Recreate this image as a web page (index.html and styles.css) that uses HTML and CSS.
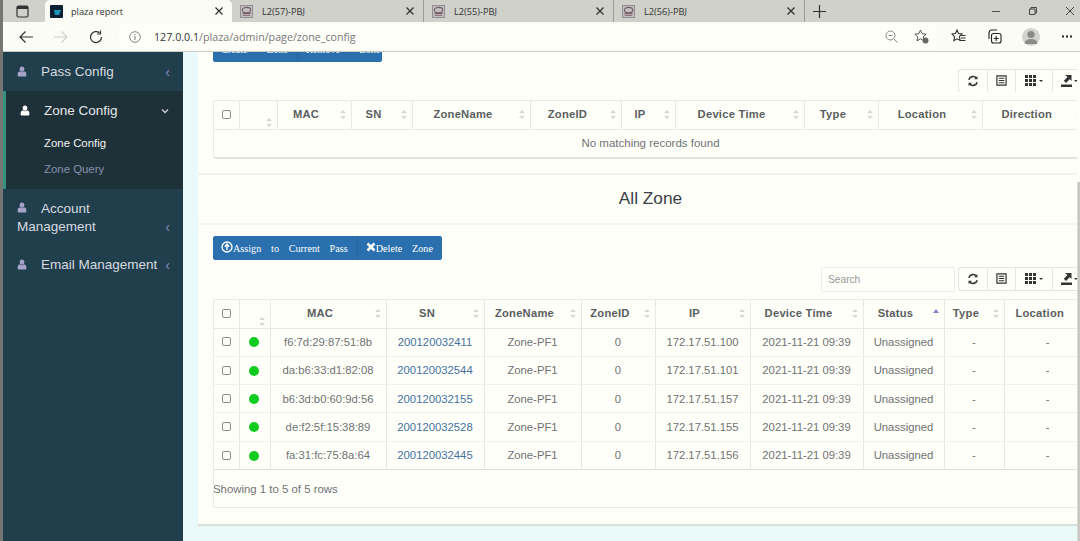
FILE: index.html
```html
<!DOCTYPE html>
<html lang="en">
<head>
<meta charset="utf-8">
<title>plaza report</title>
<link rel="stylesheet" href="styles.css">
</head>
<body>
<svg class="defs" width="0" height="0" aria-hidden="true">
  <symbol id="user" viewBox="0 0 12 14"><path d="M6 .5c1.900 0 3 1.400 3 3.200S7.900 7.200 6 7.200 3 5.500 3 3.700 4.100.5 6 .5zM3.300 6.700c.8.900 1.700 1.300 2.700 1.300s1.900-.4 2.700-1.300c1.700.5 2.800 1.700 2.800 3.500v2.300c0 .6-.5 1-1 1h-9c-.5 0-1-.4-1-1v-2.300c0-1.800 1.100-3 2.800-3.500z" fill="currentColor"/></symbol>
  <symbol id="sync" viewBox="0 0 14 14"><path d="M2.200 5.600A5 5 0 0 1 11 3.700M11.800 8.400A5 5 0 0 1 3 10.300" fill="none" stroke="currentColor" stroke-width="1.900"/><path d="M12.200 1.200v3.900H8.300zM1.800 12.800V8.900h3.900z" fill="currentColor"/></symbol>
  <symbol id="list" viewBox="0 0 12 12"><path d="M1 1h10v10H1z" fill="none" stroke="currentColor" stroke-width="1.300"/><path d="M3 3.500h6M3 6h6M3 8.500h6" stroke="currentColor" stroke-width="1.200"/></symbol>
  <symbol id="grid" viewBox="0 0 11 11"><path d="M0 0h3v3H0zM4 0h3v3H4zM8 0h3v3H8zM0 4h3v3H0zM4 4h3v3H4zM8 4h3v3H8zM0 8h3v3H0zM4 8h3v3H4zM8 8h3v3H8z" fill="currentColor"/></symbol>
  <symbol id="export" viewBox="0 0 11 12"><path d="M0 9.500h11V12H0zM4 0h6.500v6L8.700 4.200 5 8 2.800 5.800l3.700-3.700z" fill="currentColor"/></symbol>
  <symbol id="tabicon" viewBox="0 0 14 14"><rect x=".5" y=".5" width="13" height="13" fill="#c2bfc0" stroke="#8f8a8c"/><ellipse cx="7" cy="5.500" rx="4.500" ry="3" fill="none" stroke="#6d5c66" stroke-width="1.200"/><path d="M2.500 9h9M3 11h8" stroke="#80606e" stroke-width="1.200"/></symbol>
  <symbol id="x" viewBox="0 0 10 10"><path d="M1.500 1.500l7 7M8.500 1.500l-7 7" stroke="currentColor" stroke-width="1.300" fill="none"/></symbol>
</svg>

<div class="window">
  <div class="edge"></div>
  <div class="frame">
    <header class="tabstrip">
      <svg class="win-btn" width="13" height="13" viewBox="0 0 13 13"><rect x="1" y="1" width="11" height="11" rx="1.500" fill="none" stroke="#333" stroke-width="1.200"/><path d="M1 1h11v3H1z" fill="#333"/></svg>
      <div class="tab active">
        <svg class="fav" width="13" height="13" viewBox="0 0 13 13"><rect width="13" height="13" rx="1" fill="#0e1f33"/><path d="M4 5h7l-2 5H5z" fill="#1c94b8"/></svg>
        <span class="tab-title">plaza report</span>
        <svg class="tab-x" width="10" height="10"><use href="#x"/></svg>
      </div>
      <div class="tab t57">
        <svg class="fav" width="13" height="13"><use href="#tabicon"/></svg>
        <span class="tab-title">L2(57)-PBJ</span>
        <svg class="tab-x" width="10" height="10"><use href="#x"/></svg>
      </div>
      <div class="tab t55">
        <svg class="fav" width="13" height="13"><use href="#tabicon"/></svg>
        <span class="tab-title">L2(55)-PBJ</span>
        <svg class="tab-x" width="10" height="10"><use href="#x"/></svg>
      </div>
      <div class="tab t56">
        <svg class="fav" width="13" height="13"><use href="#tabicon"/></svg>
        <span class="tab-title">L2(56)-PBJ</span>
        <svg class="tab-x" width="10" height="10"><use href="#x"/></svg>
      </div>
      <svg class="plus" width="13" height="13" viewBox="0 0 13 13"><path d="M6.500 0v13M0 6.500h13" stroke="#333" stroke-width="1.200"/></svg>
      <div class="caption">
        <svg width="10" height="10" viewBox="0 0 10 10"><path d="M1 5.500h8" stroke="#555" stroke-width="1"/></svg>
        <svg width="10" height="10" viewBox="0 0 10 10"><path d="M1.500 3h5.500v5.500H1.500zM3 3V1.500h5.500V7H7" fill="none" stroke="#444" stroke-width="1"/></svg>
        <svg width="10" height="10" viewBox="0 0 10 10"><path d="M1 1l8 8M9 1l-8 8" stroke="#444" stroke-width="1"/></svg>
      </div>
    </header>

    <nav class="toolbar">
      <svg class="nav-back" width="16" height="14" viewBox="0 0 16 14"><path d="M15 7H2M7.500 1.500L2 7l5.500 5.500" fill="none" stroke="#333" stroke-width="1.200"/></svg>
      <svg class="nav-fwd" width="16" height="14" viewBox="0 0 16 14"><path d="M1 7h13M8.500 1.500L14 7l-5.500 5.500" fill="none" stroke="#cfd1ca" stroke-width="1.200"/></svg>
      <svg class="nav-reload" width="14" height="14" viewBox="0 0 14 14"><path d="M12.500 7A5.500 5.500 0 1 1 10.500 2.800" fill="none" stroke="#333" stroke-width="1.200"/><path d="M11.500 .5v3.500H8" fill="none" stroke="#333" stroke-width="1.200"/></svg>
      <div class="urlbar">
        <svg class="info" width="12" height="12" viewBox="0 0 12 12"><circle cx="6" cy="6" r="5.300" fill="none" stroke="#777" stroke-width=".9"/><path d="M6 5v4M6 3v1.200" stroke="#777" stroke-width="1"/></svg>
        <span class="url"><span class="host">127.0.0.1</span>/plaza/admin/page/zone_config</span>
        <svg class="zoom-out" width="13" height="13" viewBox="0 0 13 13"><circle cx="5.500" cy="5.500" r="4.500" fill="none" stroke="#888"/><path d="M3.500 5.500h4M9 9l3.500 3.500" stroke="#888"/></svg>
        <svg class="fav-add" width="15" height="15" viewBox="0 0 15 15"><path d="M6.500 1l1.700 3.700 4 .4-3 2.700.8 4-3.500-2-3.500 2 .8-4-3-2.700 4-.4z" fill="none" stroke="#555"/><circle cx="11.500" cy="11.500" r="3" fill="#666"/></svg>
      </div>
      <svg class="tb-ic favs" width="15" height="15" viewBox="0 0 15 15"><path d="M6 1l1.500 3.500 3.500.4-2.600 2.500.7 3.800L6 9.800l-3.100 1.900.7-3.800L1 4.900l3.500-.4z" fill="none" stroke="#333" stroke-width="1.100"/><path d="M10 6.500h4.500M10 9h4.500M8.500 11.500h6" stroke="#333"/></svg>
      <svg class="tb-ic colls" width="15" height="15" viewBox="0 0 15 15"><rect x="4.500" y="4.500" width="9.500" height="9.500" rx="2" fill="none" stroke="#222" stroke-width="1.100"/><path d="M2 10V4a3 3 0 0 1 3-3h5M9.200 7v5M6.700 9.500h5" fill="none" stroke="#222" stroke-width="1.100"/></svg>
      <div class="avatar"><svg width="18" height="18" viewBox="0 0 18 18"><circle cx="9" cy="6.500" r="3.600" fill="#8a8a86"/><path d="M2.500 16c0-3.500 3-5 6.500-5s6.500 1.500 6.500 5z" fill="#8a8a86"/></svg></div>
      <span class="dots"></span>
    </nav>

    <div class="main">
      <aside class="sidebar">
        <a class="menu-item"><svg class="mi" width="10" height="11"><use href="#user"/></svg><span class="mi-label">Pass Config</span><span class="chev">&#8249;</span></a>
        <div class="menu-group">
          <a class="menu-item open"><svg class="mi" width="10" height="11"><use href="#user"/></svg><span class="mi-label">Zone Config</span><svg class="chev-down" width="8" height="6" viewBox="0 0 8 6"><path d="M1 1.500l3 3 3-3" fill="none" stroke="currentColor" stroke-width="1.300"/></svg></a>
          <a class="sub-item current">Zone Config</a>
          <a class="sub-item">Zone Query</a>
        </div>
        <a class="menu-item tall"><span class="tall-label"><svg class="mi" width="10" height="11"><use href="#user"/></svg><span class="mi-first">Account</span><br>Management</span><span class="chev">&#8249;</span></a>
        <a class="menu-item"><svg class="mi" width="10" height="11"><use href="#user"/></svg><span class="mi-label">Email Management</span><span class="chev">&#8249;</span></a>
      </aside>

      <div class="content">
        <section class="box first">
          <div class="btn-group clipped">
            <button class="btn">Create&nbsp; Zone</button>
            <button class="btn">Remove&nbsp; Zone</button>
          </div>
          <div class="tools">
            <div class="tool-group">
              <span class="tool t-sync"><svg width="12" height="12"><use href="#sync"/></svg></span>
              <span class="tool t-list"><svg width="11" height="11"><use href="#list"/></svg></span>
              <span class="tool t-grid"><svg width="11" height="11"><use href="#grid"/></svg><i class="caret"></i></span>
              <span class="tool t-exp"><svg width="11" height="12"><use href="#export"/></svg><i class="caret"></i></span>
            </div>
          </div>
          <div class="table-wrap wrap-a">
            <table class="grid-table table-a">
              <colgroup><col class="a1"><col class="a2"><col class="a3"><col class="a4"><col class="a5"><col class="a6"><col class="a7"><col class="a8"><col class="a9"><col class="a10"><col class="a11"></colgroup>
              <thead><tr>
                <th class="chk"><i class="cb"></i></th>
                <th class="sortlow"><i class="sort"></i></th>
                <th>MAC<i class="sort"></i></th>
                <th>SN<i class="sort"></i></th>
                <th>ZoneName<i class="sort"></i></th>
                <th>ZoneID<i class="sort"></i></th>
                <th>IP<i class="sort"></i></th>
                <th>Device Time<i class="sort"></i></th>
                <th>Type<i class="sort"></i></th>
                <th>Location<i class="sort"></i></th>
                <th>Direction<i class="sort"></i></th>
              </tr></thead>
              <tbody><tr><td colspan="11">No matching records found</td></tr></tbody>
            </table>
          </div>
        </section>

        <section class="box head"><h2>All Zone</h2></section>

        <section class="box last">
          <div class="btn-group">
            <button class="btn"><svg class="gl" width="12" height="12" viewBox="0 0 12 12"><circle cx="6" cy="6" r="5" fill="none" stroke="#fff" stroke-width="1.400"/><path d="M6 9V4M3.800 5.800L6 3.200l2.200 2.600" fill="none" stroke="#fff" stroke-width="1.400"/></svg>Assign to Current Pass</button>
            <button class="btn"><svg class="gl" width="10" height="10" viewBox="0 0 10 10"><path d="M1.500 1.500l7 7M8.500 1.500l-7 7" stroke="#fff" stroke-width="2.600"/></svg>Delete Zone</button>
          </div>
          <div class="tools with-search">
            <input class="search" type="text" placeholder="Search">
            <div class="tool-group">
              <span class="tool t-sync"><svg width="12" height="12"><use href="#sync"/></svg></span>
              <span class="tool t-list"><svg width="11" height="11"><use href="#list"/></svg></span>
              <span class="tool t-grid"><svg width="11" height="11"><use href="#grid"/></svg><i class="caret"></i></span>
              <span class="tool t-exp"><svg width="11" height="12"><use href="#export"/></svg><i class="caret"></i></span>
            </div>
          </div>
          <div class="table-wrap wrap-b">
            <table class="grid-table table-b">
              <colgroup><col class="b1"><col class="b2"><col class="b3"><col class="b4"><col class="b5"><col class="b6"><col class="b7"><col class="b8"><col class="b9"><col class="b10"><col class="b11"></colgroup>
              <thead><tr>
                <th class="chk"><i class="cb"></i></th>
                <th class="sortlow"><i class="sort"></i></th>
                <th>MAC<i class="sort"></i></th>
                <th>SN<i class="sort"></i></th>
                <th>ZoneName<i class="sort"></i></th>
                <th>ZoneID<i class="sort"></i></th>
                <th>IP<i class="sort"></i></th>
                <th>Device Time<i class="sort"></i></th>
                <th>Status<i class="sort asc"></i></th>
                <th>Type<i class="sort"></i></th>
                <th>Location<i class="sort"></i></th>
              </tr></thead>
              <tbody>
                <tr><td><i class="cb"></i></td><td><i class="dot"></i></td><td>f6:7d:29:87:51:8b</td><td><a class="sn">200120032411</a></td><td>Zone-PF1</td><td>0</td><td>172.17.51.100</td><td>2021-11-21 09:39</td><td>Unassigned</td><td>-</td><td>-</td></tr>
                <tr><td><i class="cb"></i></td><td><i class="dot"></i></td><td>da:b6:33:d1:82:08</td><td><a class="sn">200120032544</a></td><td>Zone-PF1</td><td>0</td><td>172.17.51.101</td><td>2021-11-21 09:39</td><td>Unassigned</td><td>-</td><td>-</td></tr>
                <tr><td><i class="cb"></i></td><td><i class="dot"></i></td><td>b6:3d:b0:60:9d:56</td><td><a class="sn">200120032155</a></td><td>Zone-PF1</td><td>0</td><td>172.17.51.157</td><td>2021-11-21 09:39</td><td>Unassigned</td><td>-</td><td>-</td></tr>
                <tr><td><i class="cb"></i></td><td><i class="dot"></i></td><td>de:f2:5f:15:38:89</td><td><a class="sn">200120032528</a></td><td>Zone-PF1</td><td>0</td><td>172.17.51.155</td><td>2021-11-21 09:39</td><td>Unassigned</td><td>-</td><td>-</td></tr>
                <tr><td><i class="cb"></i></td><td><i class="dot"></i></td><td>fa:31:fc:75:8a:64</td><td><a class="sn">200120032445</a></td><td>Zone-PF1</td><td>0</td><td>172.17.51.156</td><td>2021-11-21 09:39</td><td>Unassigned</td><td>-</td><td>-</td></tr>
              </tbody>
            </table>
            <div class="pager">Showing 1 to 5 of 5 rows</div>
          </div>
        </section>
      </div>

      <div class="scrollbar"><div class="thumb"></div></div>
    </div>
  </div>
</div>
</body>
</html>
```

FILE: styles.css
```css
* { box-sizing: border-box; }
html, body { margin: 0; height: 100%; overflow: hidden; }
body { font-family: "Liberation Sans", Arial, sans-serif; background: #eafafa; }
.defs { position: absolute; }
.window { display: flex; width: 1080px; height: 541px; overflow: hidden; }
.edge { width: 3px; flex: none; background: #767672; }
.frame { flex: 1; min-width: 0; display: flex; flex-direction: column; }

/* tab strip */
.tabstrip { height: 22px; flex: none; background: #cfd1ca; display: flex; align-items: center; font-family: "Open Sans", sans-serif; font-size: 9.200px; color: #333; }
.win-btn { margin-left: 13px; margin-right: 16px; flex: none; }
.tab { height: 22px; display: flex; align-items: center; padding-left: 8px; border-right: 1px solid #9a9c96; flex: none; }
.tab.active { width: 187px; padding-left: 5px; background: #fbfcf5; border: 0; border-radius: 5px 5px 0 0; }
.tab.t57 { width: 192px; }
.tab.t55 { width: 190px; }
.tab.t56 { width: 191px; }
.fav { flex: none; margin-right: 8px; }
.t57 .fav, .t55 .fav, .t56 .fav { margin-right: 9px; }
.tab-title { flex: 1; white-space: nowrap; }
.tab-x { margin-right: 8px; flex: none; color: #333; }
.plus { margin-left: 8px; flex: none; }
.caption { margin-left: auto; display: flex; gap: 27px; margin-right: 5px; }

/* toolbar */
.toolbar { height: 30px; flex: none; background: #fbfcf5; border-bottom: 1px solid #c8cac3; display: flex; align-items: center; }
.nav-back { margin-left: 15px; flex: none; }
.nav-fwd { margin-left: 19px; flex: none; }
.nav-reload { margin-left: 20px; flex: none; }
.urlbar { margin-left: 16px; width: 817px; height: 25px; background: #fffffa; border-radius: 3px; display: flex; align-items: center; flex: none; font-family: "Open Sans", sans-serif; }
.info { margin-left: 10px; flex: none; }
.url { margin-left: 13px; font-size: 10.700px; color: #777; white-space: nowrap; }
.host { color: #333; }
.zoom-out { margin-left: auto; flex: none; }
.fav-add { margin-left: 16px; margin-right: 7px; flex: none; }
.tb-ic { flex: none; }
.favs { margin-left: 15px; }
.colls { margin-left: 21px; }
.avatar { width: 18px; height: 18px; border-radius: 50%; background: #d2d3ce; margin-left: 20px; flex: none; overflow: hidden; }
.dots { width: 12px; height: 3px; margin-left: 21px; flex: none; background: radial-gradient(circle at center, #333 1px, transparent 1.300px) 0 0 / 4px 3px repeat-x; }

/* main */
.main { flex: 1; min-height: 0; display: flex; overflow: hidden; }
.sidebar { width: 180px; flex: none; background: #203e4b; color: #d7dbe0; font-size: 13.500px; }
.menu-item { display: flex; align-items: center; height: 39px; padding-left: 14px; }
.mi { color: #a5a3c9; flex: none; }
.mi-label { margin-left: 14px; white-space: nowrap; }
.chev { margin-left: auto; margin-right: 13px; font-size: 14px; color: #8f8cbc; }
.menu-group { background: #1f3138; border-left: 3px solid #35927f; padding-bottom: 7px; }
.menu-group .menu-item { padding-left: 14px; color: #e4e8ea; }
.menu-group .mi { color: #fff; }
.chev-down { margin-left: auto; margin-right: 14px; color: #d0d4dc; }
.sub-item { display: flex; align-items: center; height: 26px; padding-left: 38px; font-size: 11.400px; color: #8790ad; }
.sub-item.current { color: #f2f4f4; }
.menu-item.tall { height: 56px; padding-top: 2px; }
.menu-item.tall .chev { margin-top: 17px; }
.tall-label { line-height: 18px; }
.mi-first { margin-left: 14px; }

/* content */
.content { flex: 1; min-width: 0; padding-left: 15px; overflow: hidden; }
.box { background: #fffffa; padding: 0 0 0 15px; }
.box.first { display: flow-root; height: 123px; border-bottom: 2px solid #f0f2ec; }
.box.head { height: 50px; border-bottom: 2px solid #f3f8f4; }
.box.last { height: 299px; padding-top: 11px; box-shadow: 0 2px 1px #d8dfdc; }
.box.head h2 { margin: 0 0 0 -15px; padding-top: 12px; text-align: center; font-weight: 400; font-size: 17.300px; line-height: 22px; color: #3a4048; width: 905px; }

.btn-group { display: inline-flex; height: 24px; border-radius: 3px; overflow: hidden; background: #2a70ae; vertical-align: top; }
.btn-group.clipped { display: flex; width: 169px; height: 26px; margin-top: -16px; }
.btn { border: 0; background: #2a70ae; color: #fff; font-family: "Liberation Serif", serif; font-size: 10.200px; word-spacing: 7.200px; padding: 0 9px 0 8px; display: flex; align-items: center; white-space: nowrap; }
.btn + .btn { border-left: 1px solid #2a6599; }
.clipped .btn { flex: 1; justify-content: center; }
.gl { flex: none; margin-bottom: 3px; }

.tools { display: flex; justify-content: flex-end; height: 23px; margin-top: 7px; overflow: hidden; }
.box.last .tools { height: 25px; margin-top: 7px; }
.tool-group { display: flex; height: 23.500px; width: 119px; flex: none; border: 1px solid #e5e6df; border-right: 0; border-radius: 3px 0 0 3px; color: #333; }
.tool { display: flex; align-items: center; justify-content: center; gap: 3px; flex: none; border-right: 1px solid #e5e6df; }
.t-sync { width: 29px; }
.t-list { width: 28px; }
.t-grid { width: 37px; }
.t-exp { width: 30px; border-right: 0; justify-content: flex-start; padding-left: 8px; gap: 2px; }
.caret { border: 2.500px solid transparent; border-top-color: #333; border-bottom: 0; width: 0; height: 0; }
.search { width: 134px; height: 25px; margin-right: 3px; border: 1px solid #e4eff3; border-radius: 2px; background: #fffffa; padding: 0 6px; font: 10.200px "Liberation Sans", sans-serif; color: #666; outline: 0; }
.search::placeholder { color: #999; opacity: 1; }

.table-wrap { margin-top: 8px; overflow: hidden; border: 1px solid #e9eae3; border-right: 0; border-radius: 3px 0 0 3px; }
.wrap-a { border-bottom: 2px solid #e3e4dd; }
.wrap-b { margin-top: 7px; height: 209px; }
.grid-table { border-collapse: collapse; table-layout: fixed; font-size: 11.300px; color: #6f7272; }
.table-a { width: 873px; }
.table-b { width: 877px; }
.grid-table th { position: relative; height: 28px; padding: 0 24px 2px 8px; border-left: 1px solid #e8e9e2; border-bottom: 1px solid #e8e9e2; font-size: 11.200px; font-weight: 700; color: #5a5e60; letter-spacing: .25px; text-align: center; white-space: nowrap; }
.grid-table th:first-child, .grid-table td:first-child { border-left: 0; }
.grid-table th.chk { padding: 0; }
.grid-table td { height: 28.300px; padding: 0; text-align: center; border-left: 1px solid #e6e7e0; border-bottom: 1px solid #eef1ec; white-space: nowrap; }
.table-a td { height: 28px; border-left: 0; border-bottom: 0; font-size: 11.500px; }
.table-b tbody tr:last-child td { border-bottom: 1px solid #dfe0d9; }

.a1 { width: 25px; } .a2 { width: 38px; } .a3 { width: 74px; } .a4 { width: 61px; } .a5 { width: 118px; } .a6 { width: 91px; }
.a7 { width: 54px; } .a8 { width: 129px; } .a9 { width: 74px; } .a10 { width: 104px; } .a11 { width: 105px; }
.b1 { width: 25px; } .b2 { width: 31px; } .b3 { width: 116px; } .b4 { width: 98px; } .b5 { width: 97px; } .b6 { width: 74px; }
.b7 { width: 95px; } .b8 { width: 113px; } .b9 { width: 81px; } .b10 { width: 60px; } .b11 { width: 87px; }

.sort { position: absolute; right: 5px; top: 9px; width: 6px; height: 9px; }
.sort::before, .sort::after { content: ""; position: absolute; left: 0; border: 3px solid transparent; }
.sort::before { top: 0; border-bottom: 3.500px solid #d6d8d2; border-top: 0; }
.sort::after { bottom: 0; border-top: 3.500px solid #d6d8d2; border-bottom: 0; }
.sort.asc::before { border-left-width: 3.500px; border-right-width: 3.500px; border-bottom: 4.500px solid #8a84d0; }
.sort.asc::after { display: none; }
.sortlow .sort { top: 17px; }
.cb { display: inline-block; width: 9px; height: 9px; margin-bottom: 2px; border: 1px solid #8b8d8b; border-radius: 2px; background: #fffffa; vertical-align: middle; }
.dot { display: inline-block; width: 10px; height: 10px; margin-right: 1px; margin-bottom: 1px; border-radius: 50%; background: #10cc1e; vertical-align: middle; }
.sn { color: #44729f; }
.pager { margin-left: -1px; padding: 12px 0 0; font-size: 11.400px; color: #6f7272; line-height: 14px; }

.scrollbar { width: 3px; flex: none; background: #fffffa; }
.thumb { height: 360px; margin-top: 130px; background: #c6c8c1; border-left: 1px solid #dadbd5; }
```
